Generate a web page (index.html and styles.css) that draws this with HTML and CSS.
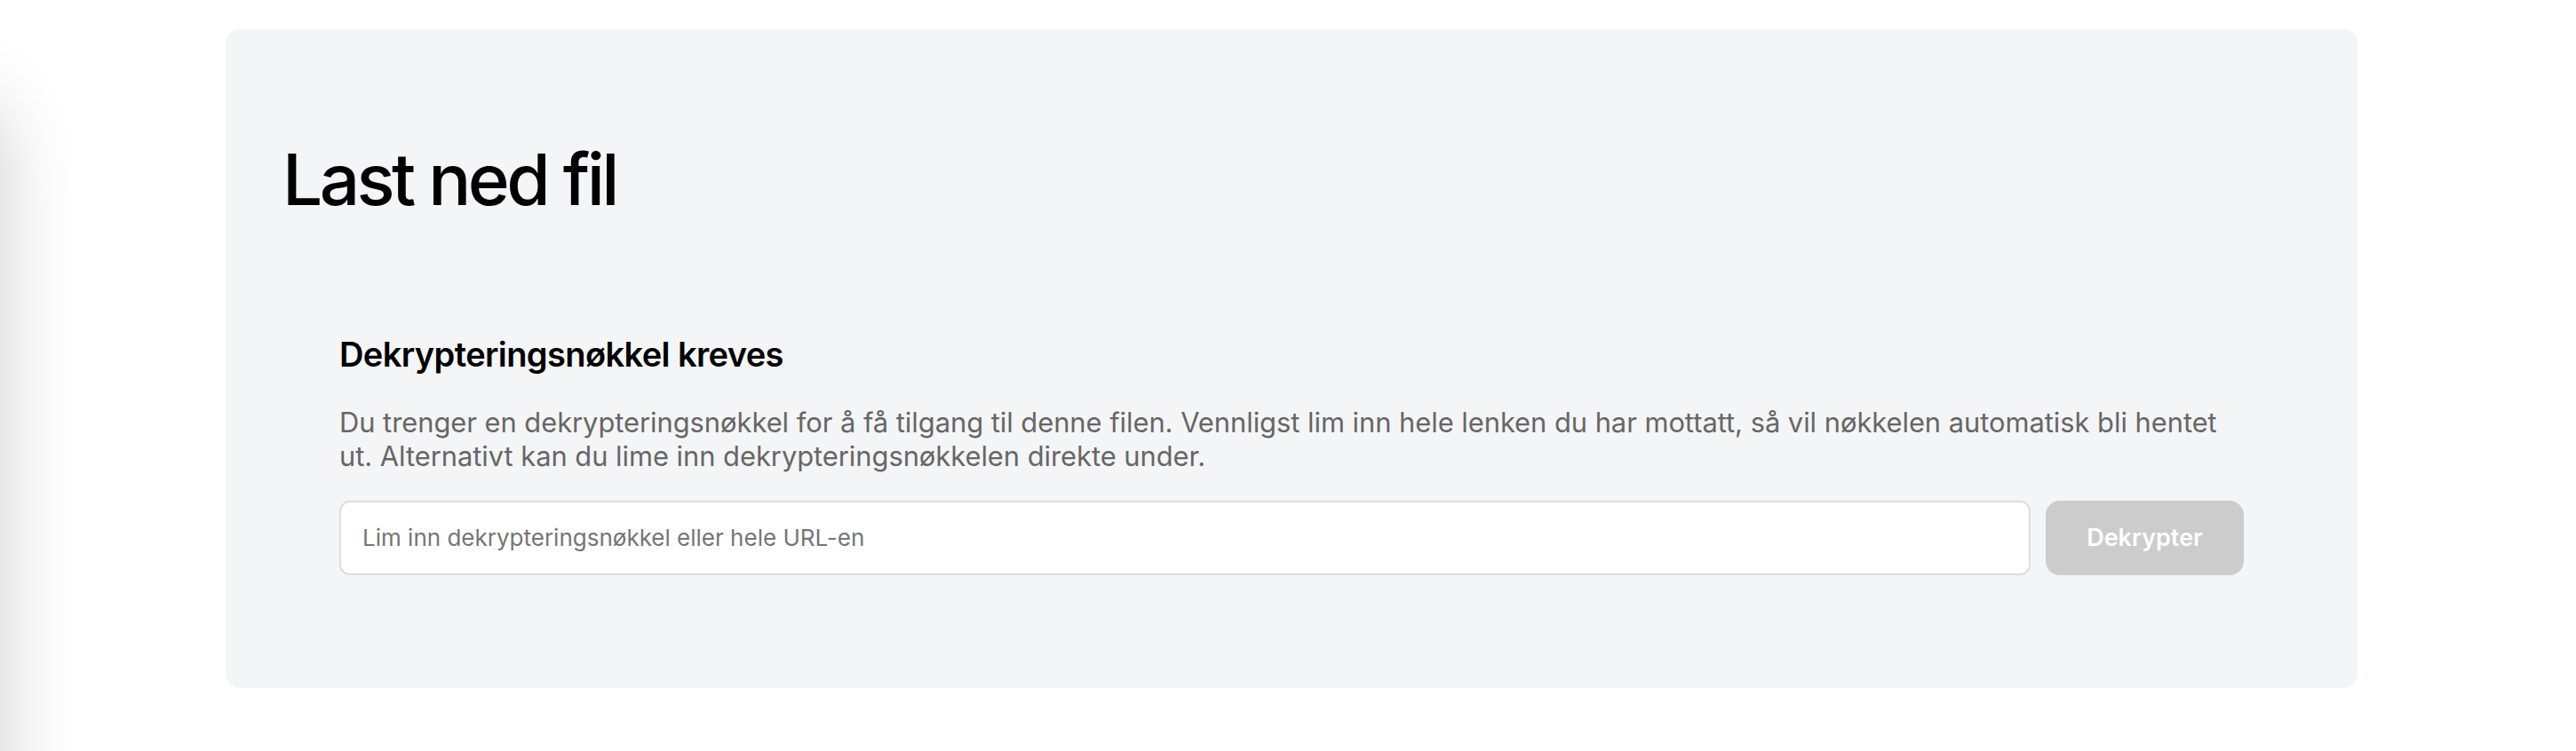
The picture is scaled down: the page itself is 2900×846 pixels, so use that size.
FILE: index.html
```html
<!DOCTYPE html>
<html lang="no">
<head>
<meta charset="utf-8">
<title>Last ned fil</title>
<link rel="stylesheet" href="styles.css">
</head>
<body>
<div class="edge-shadow"></div>
<main class="page">
  <section class="card">
    <h1 class="title">Last ned fil</h1>
    <div class="key-panel">
      <h2 class="key-title">Dekrypteringsnøkkel kreves</h2>
      <p class="key-text">Du trenger en dekrypteringsnøkkel for å få tilgang til denne filen. Vennligst lim inn hele lenken du har mottatt, så vil nøkkelen automatisk bli hentet ut. Alternativt kan du lime inn dekrypteringsnøkkelen direkte under.</p>
      <form class="key-row">
        <input class="key-input" type="text" placeholder="Lim inn dekrypteringsnøkkel eller hele URL-en">
        <button class="key-button" type="button" disabled>Dekrypter</button>
      </form>
    </div>
  </section>
</main>
</body>
</html>
```

FILE: styles.css
```css
html, body {
  margin: 0;
  padding: 0;
  background: #ffffff;
  font-family: Inter, "Liberation Sans", Arial, sans-serif;
}

.edge-shadow {
  position: fixed;
  left: -200px;
  top: 110px;
  width: 200px;
  height: 2000px;
  border-radius: 60px;
  box-shadow: 0 0 90px rgba(0, 0, 0, 0.2);
  pointer-events: none;
}

.page {
  padding: 33px 0 0 254px;
}

.card {
  box-sizing: border-box;
  width: 2400px;
  height: 742px;
  padding: 64px;
  background: #f4f5f7;
  border-radius: 16px;
}

.title {
  margin: 65px 0 0 0;
  font-size: 80px;
  line-height: 80px;
  font-weight: 500;
  letter-spacing: -3.6px;
  color: #000000;
}

.key-panel {
  margin-top: 71px;
  padding: 64px;
}

.key-title {
  margin: 0;
  font-size: 38px;
  line-height: 45.6px;
  font-weight: 600;
  letter-spacing: -0.6px;
  color: #000000;
}

.key-text {
  margin: 34px 0 0 0;
  font-size: 30.8px;
  line-height: 38px;
  font-weight: 400;
  color: #666666;
}

.key-row {
  display: flex;
  gap: 17px;
  margin-top: 31px;
  height: 84px;
}

.key-input {
  flex: 1;
  box-sizing: border-box;
  height: 84px;
  padding: 0 24px;
  border: 2px solid #dedede;
  border-radius: 12px;
  background: #ffffff;
  font-family: inherit;
  font-size: 26px;
  color: #333333;
  outline: none;
}

.key-input::placeholder {
  color: #757575;
}

.key-button {
  box-sizing: border-box;
  width: 223px;
  height: 84px;
  padding: 0;
  border: none;
  border-radius: 16px;
  background: #cccccc;
  color: #ffffff;
  font-family: inherit;
  font-size: 27px;
  font-weight: 600;
}
```
